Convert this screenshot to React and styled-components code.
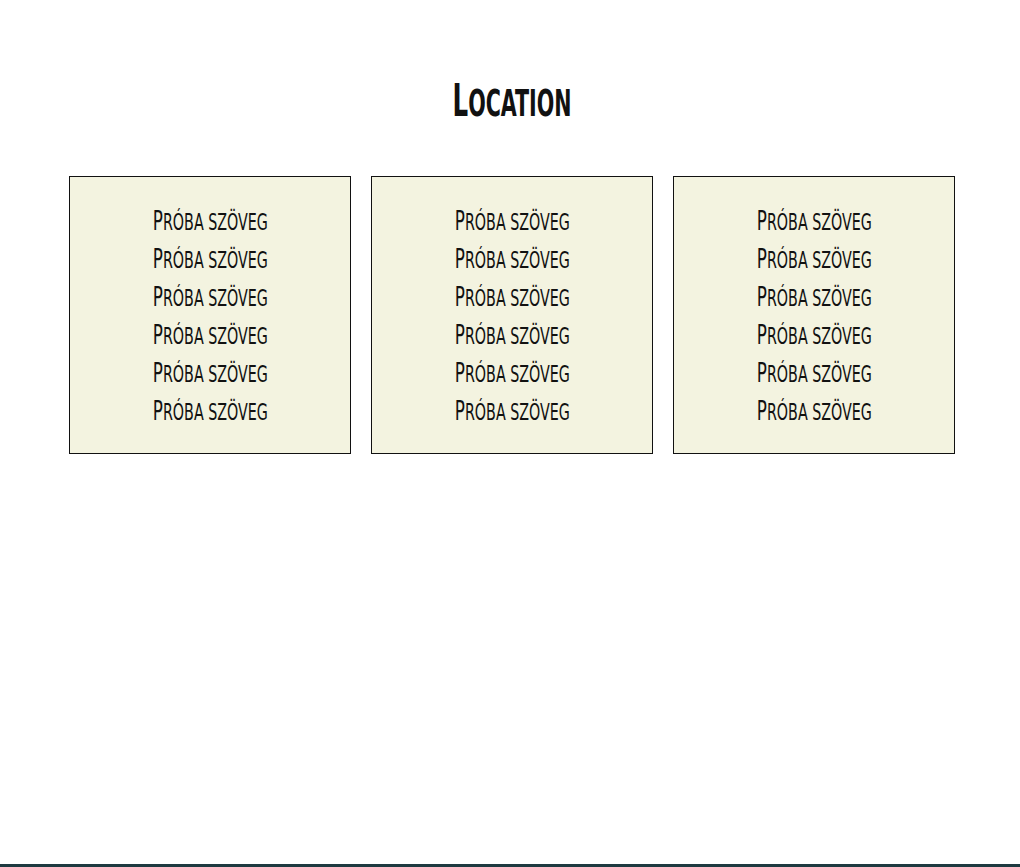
import styled, { createGlobalStyle } from "styled-components"

const GlobalStyle = createGlobalStyle`
  html, body {
    margin: 0;
    padding: 0;
    background: #ffffff;
  }
  body {
    font-family: "DejaVu Sans Condensed", "DejaVu Sans", sans-serif;
    color: #111111;
  }
`

const lines = ["Próba szöveg", "Próba szöveg", "Próba szöveg", "Próba szöveg", "Próba szöveg", "Próba szöveg"]

export default function App() {
  return (
    <>
      <GlobalStyle />
      <Page>
        <Section>
          <Title>Location</Title>
          <Cards>
            {[0, 1, 2].map((i) => (
              <Card key={i}>
                {lines.map((t, j) => (
                  <Line key={j}>{t}</Line>
                ))}
              </Card>
            ))}
          </Cards>
        </Section>
        <Footer />
      </Page>
    </>
  )
}

const Page = styled.div`
  display: flex;
  flex-direction: column;
  min-height: 867px;
`
const Section = styled.section`
  flex: 1;
  display: flex;
  flex-direction: column;
  align-items: center;
  padding: 73px 0 0 4px;
`
const Title = styled.h1`
  margin: 0;
  font-size: 37px;
  font-weight: 700;
  text-transform: uppercase;
  line-height: 56px;
  transform: scaleX(0.62);
  &::first-letter {
    font-size: 44px;
    line-height: 56px;
  }
`
const Cards = styled.div`
  display: flex;
  gap: 20px;
  margin-top: 44px;
`
const Card = styled.div`
  width: 282px;
  height: 278px;
  box-sizing: border-box;
  border: 1px solid #111111;
  background: #f3f3e0;
  display: flex;
  flex-direction: column;
  align-items: center;
  justify-content: center;
  padding-top: 2px;
`
const Line = styled.div`
  height: 38px;
  font-size: 23px;
  font-weight: 400;
  text-transform: uppercase;
  line-height: 38px;
  transform: scaleX(0.69);
  &::first-letter {
    font-size: 27px;
    line-height: 38px;
  }
`
const Footer = styled.div`
  height: 3px;
  background: #1e3a40;
`
